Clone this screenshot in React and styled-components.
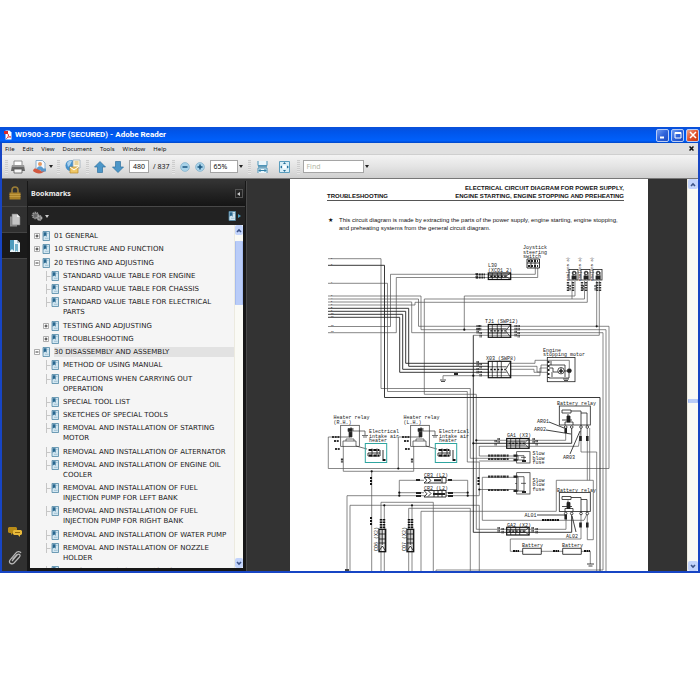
import React from "react";
import styled, { createGlobalStyle } from "styled-components";

const Global = createGlobalStyle`
  *, *::before, *::after { box-sizing: border-box; }
  body { margin: 0; background: #fff; font-family: "DejaVu Sans", sans-serif; font-size: 7px; color: #111; }
  button, input, select { font: inherit; color: inherit; margin: 0; padding: 0; border: 0; background: none; }
  ul { list-style: none; margin: 0; padding: 0; }
  svg { display: block; flex: none; }
`;

const Screen = styled.div`
  height: 100vh;
  min-height: 420px;
  padding: 127px 0;
  display: flex;
`;
const AppWindow = styled.main`
  flex: 1;
  min-width: 0;
  display: flex;
  flex-direction: column;
  border: solid #1745c4;
  border-width: 0 2px 2px;
`;
const TitleBar = styled.header`
  flex: none;
  height: 16px;
  margin: 0 -2px;
  padding: 0 1px 0 4px;
  display: flex;
  align-items: center;
  gap: 3px;
  background: linear-gradient(#0a50d8, #0055ea 30%, #0060fb 85%, #0046c8);
`;
const Title = styled.h1`
  margin: 0;
  flex: 1;
  font: bold 8px/14px Roboto, sans-serif;
  color: #fff;
`;
const WindowButton = styled.button`
  width: 13px;
  height: 13px;
  margin-left: -1px;
  border: 1px solid #b9ccf5;
  border-radius: 2px;
  background: ${(p) => (p.$close ? "linear-gradient(135deg, #f0a48c, #e2512c 50%, #c53a14)" : "linear-gradient(135deg, #6d9bf3, #2f63da 50%, #1d4cc0)")};
  display: grid;
  place-items: center;
`;
const MenuBar = styled.nav`
  flex: none;
  height: 12px;
  padding: 0 4px 0 3px;
  display: flex;
  align-items: center;
  background: #e0e0e0;
  border-bottom: 1px solid #cfcfcf;
  font: 6px/10px "Noto Sans", sans-serif;
  gap: 8px;
`;
const MenuButton = styled.button`
  white-space: nowrap;
`;
const CloseDoc = styled.button`
  margin-left: auto;
`;
const ToolBar = styled.div`
  flex: none;
  height: 24px;
  padding: 0 3px;
  display: flex;
  align-items: center;
  background: linear-gradient(#f3f3f3, #e4e4e4 50%, #cfcfcf);
  border-bottom: 1px solid #777;
`;
const ToolButton = styled.button`
  display: flex;
  align-items: center;
  gap: 2px;
  margin-left: ${(p) => p.$gap || 0}px;
`;
const Grip = styled.span`
  width: 3px;
  height: 14px;
  margin-left: ${(p) => p.$gap || 0}px;
  background: repeating-linear-gradient(#cdcdcd 0 1px, #e6e6e6 1px 2px);
`;
const Field = styled.input`
  width: ${(p) => p.$w}px;
  height: 13px;
  margin-left: ${(p) => p.$gap || 0}px;
  padding: 0 2px;
  border: 1px solid #a5a5a5;
  background: #fff;
  text-align: ${(p) => p.$align || "left"};
  font: 7px/11px "Noto Sans", sans-serif;
  &::placeholder { color: #b5b8a8; opacity: 1; }
`;
const PageCount = styled.span`
  margin-left: 4px;
  font: 7px/12px "Noto Sans", sans-serif;
`;
const Body = styled.div`
  flex: 1;
  min-height: 0;
  display: flex;
  background: #333;
`;
const Rail = styled.nav`
  flex: none;
  width: 25px;
  display: flex;
  flex-direction: column;
  background: #303030;
`;
const RailButton = styled.button`
  height: ${(p) => p.$h || 26}px;
  margin-top: ${(p) => (p.$push ? "auto" : "0")};
  display: grid;
  place-items: center;
  background: ${(p) => (p.$active ? "#1a1a1a" : "none")};
  border-bottom: 1px solid ${(p) => (p.$line ? "#444" : "transparent")};
`;
const Panel = styled.aside`
  flex: none;
  width: 220px;
  margin-top: 2px;
  padding: 0 3px 3px 3px;
  display: flex;
  flex-direction: column;
  background: #171717;
  border-right: 1px solid #484848;
`;
const PanelHead = styled.div`
  flex: none;
  height: 26px;
  margin: 0 -2px;
  padding: 0 2px 0 3px;
  display: flex;
  align-items: center;
  justify-content: space-between;
  background: linear-gradient(#333, #202020 60%, #151515);
  border-bottom: 1px solid #484848;
`;
const PanelTitle = styled.h2`
  margin: 0;
  font: bold 7px/12px "Noto Sans", sans-serif;
  color: #eee;
`;
const Collapse = styled.button`
  width: 8px;
  height: 9px;
  border: 1px solid #555;
  display: grid;
  place-items: center;
`;
const PanelTools = styled.div`
  flex: none;
  height: 18px;
  padding: 0 4px 0 3px;
  display: flex;
  align-items: center;
  justify-content: space-between;
  background: #222;
  margin: 0 -2px;
`;
const ListArea = styled.div`
  flex: 1;
  min-height: 0;
  display: flex;
  background: #f5f5f5;
`;
const Tree = styled.div`
  flex: 1;
  min-width: 0;
  overflow: hidden;
  display: flex;
`;
const TreeList = styled.ul`
  flex: 1;
  margin: 6px 0 -8px;
  display: flex;
  flex-direction: column;
  justify-content: space-between;
`;
const TreeItem = styled.li`
  display: flex;
  align-items: flex-start;
  padding-left: ${(p) => (p.$level ? 13 : 4)}px;
  background: linear-gradient(90deg, transparent 24px, ${(p) => (p.$selected ? "#e2e2e2" : "transparent")} 24px);
`;
const Toggle = styled.button`
  flex: none;
  width: 8px;
  height: 10px;
  display: grid;
  place-items: center start;
`;
const TreeLink = styled.a`
  display: flex;
  gap: 4px;
  color: #222;
  text-decoration: none;
  white-space: nowrap;
  font: 7px/10px "DejaVu Sans", sans-serif;
`;
const ScrollBar = styled.div`
  flex: none;
  width: ${(p) => p.$w}px;
  display: flex;
  flex-direction: column;
  background: #fafaf5;
  border-left: 1px solid #eceadf;
`;
const ScrollButton = styled.button`
  flex: none;
  height: 10px;
  display: grid;
  place-items: center;
  border-radius: 2px;
  background: #c3d4fb;
`;
const ScrollTrack = styled.div`
  flex: 1;
  display: grid;
  grid-template-rows: ${(p) => p.$rows};
`;
const Thumb = styled.div`
  grid-row: 2;
  border-radius: 1px;
  background: #b9ccf8;
  border: solid #a5bbef;
  border-width: 0 1px;
`;
const DocArea = styled.section`
  flex: 1;
  min-width: 0;
  padding: 0 39px 0 43px;
  overflow: hidden;
`;
const Page = styled.article`
  min-height: 100%;
  background: #fff;
  font-family: "Liberation Sans", sans-serif;
`;
const PageHead = styled.header`
  margin: 0 24px 0 37px;
  padding-top: 5px;
  display: flex;
  align-items: flex-end;
  justify-content: space-between;
  border-bottom: 1px solid #555;
  font: bold 6px/8px "Liberation Sans", sans-serif;
`;
const PageTitle = styled.h3`
  margin: 0;
  font: inherit;
  text-align: right;
  white-space: nowrap;
`;
const Note = styled.p`
  margin: 15px 24px 9px 38px;
  display: flex;
  gap: 6px;
  font: 6px/8px "Liberation Sans", sans-serif;
  white-space: nowrap;
`;
const Diagram = styled.svg`
  width: 100%;
  height: auto;
  text { font: 5px "Liberation Mono", monospace; fill: #222; }
  .pin { font-size: 2px; font-weight: bold; }
  .tag { font-size: 4px; }
`;

const Down = ({ color = "#222" }) => (
  <svg width="4" height="3"><path d="M0 0h4L2 3z" fill={color} /></svg>
);
const Chevron = ({ up }) => (
  <svg width="6" height="5"><path d={up ? "M1 4l2-2 2 2" : "M1 1l2 2 2-2"} fill="none" stroke="#3d5488" strokeWidth="1.6" /></svg>
);
const BookmarkIcon = () => (
  <svg width="8" height="10" viewBox="0 0 8 10">
    <path d="M1 .5h6.5v9H1z" fill="#d3e7f1" stroke="#4f87a5" strokeWidth=".8" />
    <path d="M1.6 1.2h3v4.6L3.2 4.6 1.6 5.8z" fill="#28678f" />
    <path d="M5 2.4h1.6M3 7.3h3.6" stroke="#8eb5c9" strokeWidth=".7" />
  </svg>
);
const PdfIcon = () => (
  <svg width="8" height="10" viewBox="0 0 8 10">
    <path d="M1.5.5h4l2 2v7h-6z" fill="#fff" /><path d="M0 1h4v3H0z" fill="#d92a2a" />
    <path d="M2.4 8.6c1.6-1 2.6-4 2-4.3-.8-.2 0 2.6 2.6 2.7C5.5 6.700 3.200 7.300 2.400 8.600z" fill="none" stroke="#d33" strokeWidth=".8" />
  </svg>
);
const PrintIcon = () => (
  <svg width="14" height="14" viewBox="0 0 14 14">
    <path d="M3 1h8v5H3z" fill="#fff" stroke="#777" strokeWidth=".8" />
    <path d="M1 5h12l1 6H0z" fill="#686868" /><path d="M1 5h12v2H1z" fill="#999" />
    <path d="M3 9h8v4H3z" fill="#f5f5f5" stroke="#555" strokeWidth=".8" />
  </svg>
);
const ReviewIcon = () => (
  <svg width="14" height="14" viewBox="0 0 14 14">
    <path d="M3 .5h6.500l2.500 2.500v8H3z" fill="#f6faff" stroke="#7ea6ca" strokeWidth=".9" />
    <circle cx="7" cy="4" r="2" fill="#e79a63" /><path d="M3.500 10c0-5 7-5 7 0z" fill="#5c9bd0" />
    <path d="M0 11c1-4 4-2 6-1s4 0 7-1c-2 5-9 6-13 2z" fill="#d2583f" /><path d="M8 8.500h5v3H8z" fill="#5a96c8" />
  </svg>
);
const ShareIcon = () => (
  <svg width="16" height="15" viewBox="0 0 16 15">
    <circle cx="6" cy="6.500" r="5.500" fill="#4591cc" /><path d="M2 4c2-3 4-3 5-2L5 6 3 8z" fill="#a9d0ec" />
    <path d="M8 1h7v8H8z" fill="#fff7df" stroke="#92a5b4" strokeWidth=".7" /><path d="M9.500 3h4M9.500 5h4" stroke="#d4ad52" />
    <path d="M5 8h8v6H5z" fill="#f0c765" stroke="#b78a2b" strokeWidth=".7" /><path d="M5 8l4 3 4-3" fill="none" stroke="#fff" />
  </svg>
);
const ArrowIcon = ({ up }) => (
  <svg width="12" height="12" viewBox="0 0 12 12">
    <path d={up ? "M6 .5L11.500 6H8.500v5.500h-5V6h-3z" : "M6 11.500L.5 6h3V.5h5V6h3z"} fill="#4b96c8" stroke="#2f719f" strokeWidth=".7" />
  </svg>
);
const ZoomIcon = ({ plus }) => (
  <svg width="10" height="10" viewBox="0 0 10 10">
    <circle cx="5" cy="5" r="4.400" fill="#a9d3e9" stroke="#7eaec8" strokeWidth=".7" />
    <path d={plus ? "M2.500 5h5M5 2.500v5" : "M2.500 5h5"} stroke="#18557f" strokeWidth="1.500" />
  </svg>
);
const FitWidthIcon = () => (
  <svg width="11" height="12" viewBox="0 0 11 12">
    <path d="M1 0v4.500h9V0M1 12V7h9v5" fill="#e9f5fb" stroke="#4d94b8" /><path d="M1 5.800h9M2 9.500h7M3.500 8L2 9.500 3.500 11M7.500 8L9 9.500 7.500 11" fill="none" stroke="#2f7fa8" />
  </svg>
);
const FitPageIcon = () => (
  <svg width="11" height="12" viewBox="0 0 11 12">
    <path d="M.5.5h10v11H.5z" fill="#d9eef7" stroke="#5a9dbd" />
    <path d="M5.500 1l1.500 2H4zM5.500 11L7 9H4zM1 6l2-1.500v3zM10 6L8 4.500v3z" fill="#246f9a" /><path d="M4 4.500h3v3H4z" fill="#fff" />
  </svg>
);
const LockIcon = () => (
  <svg width="12" height="14" viewBox="0 0 12 14">
    <path d="M3 7V4c0-4 6-4 6 0v3" fill="none" stroke="#9b7d36" strokeWidth="1.600" />
    <path d="M.5 6.500h11v7H.5z" fill="#a98128" /><path d="M.5 8.500h11M.5 10.500h11" stroke="#c9a247" strokeWidth=".8" />
  </svg>
);
const PagesIcon = () => (
  <svg width="12" height="14" viewBox="0 0 12 14">
    <path d="M1 3.500h7v10H1z" fill="#8f8f8f" /><path d="M3 1h5l3 3v8H3z" fill="#c4c4c4" stroke="#777" strokeWidth=".6" /><path d="M8 1v3h3" fill="#eee" />
  </svg>
);
const MarksIcon = () => (
  <svg width="12" height="14" viewBox="0 0 12 14">
    <path d="M1 1h7l3 3v9H1z" fill="#eaf4f8" /><path d="M8 1v3h3z" fill="#a9bdc7" />
    <path d="M1 1h4v11L3 10l-2 2z" fill="#4e9cbd" /><path d="M6 5h3v8L7.500 11.500 6 13z" fill="#72b1ca" />
  </svg>
);
const CommentsIcon = () => (
  <svg width="14" height="12" viewBox="0 0 14 12">
    <path d="M1 1h7l1 1v4L8 7H5L3 9V7H1L0 6V2z" fill="#b88b17" />
    <path d="M6 4h7l1 1v3l-1 1h-1v2L10 9H6L5 8V5z" fill="#e8b93a" /><path d="M7 6.500h5" stroke="#94690c" />
  </svg>
);
const ClipIcon = () => (
  <svg width="14" height="14" viewBox="0 0 14 14">
    <path d="M4 10l5-6c2-2 4 0 2.500 2L6 12c-2 2-6 0-4-3l6-7c1-1.500 4-2 5 0M4.500 8.500L9 3.500" fill="none" stroke="#b9b9b9" strokeWidth="1.200" />
  </svg>
);
const GearIcon = () => (
  <svg width="12" height="11" viewBox="0 0 12 11">
    <circle cx="4.500" cy="4.500" r="2.800" fill="#666" stroke="#999" strokeWidth="2" strokeDasharray="1.400 .6" />
    <circle cx="8.500" cy="7" r="2" fill="#777" stroke="#aaa" strokeWidth="1.800" strokeDasharray="1.200 .5" />
  </svg>
);
const ToggleIcon = ({ open }) => (
  <svg width="6" height="6" viewBox="0 0 6 6">
    <path d="M.5.500h5v5h-5z" fill="#fff" stroke="#999" strokeWidth=".8" /><path d={open ? "M1.500 3h3" : "M1.500 3h3M3 1.500v3"} stroke="#222" strokeWidth=".9" />
  </svg>
);

const bookmarks = [
  { lines: ["01 GENERAL"], toggle: "closed" },
  { lines: ["10 STRUCTURE AND FUNCTION"], toggle: "closed" },
  { lines: ["20 TESTING AND ADJUSTING"], toggle: "open" },
  { lines: ["STANDARD VALUE TABLE FOR ENGINE"], level: 1 },
  { lines: ["STANDARD VALUE TABLE FOR CHASSIS"], level: 1 },
  { lines: ["STANDARD VALUE TABLE FOR ELECTRICAL", "PARTS"], level: 1 },
  { lines: ["TESTING AND ADJUSTING"], level: 1, toggle: "closed" },
  { lines: ["TROUBLESHOOTING"], level: 1, toggle: "closed" },
  { lines: ["30 DISASSEMBLY AND ASSEMBLY"], toggle: "open", selected: true },
  { lines: ["METHOD OF USING MANUAL"], level: 1 },
  { lines: ["PRECAUTIONS WHEN CARRYING OUT", "OPERATION"], level: 1 },
  { lines: ["SPECIAL TOOL LIST"], level: 1 },
  { lines: ["SKETCHES OF SPECIAL TOOLS"], level: 1 },
  { lines: ["REMOVAL AND INSTALLATION OF STARTING", "MOTOR"], level: 1 },
  { lines: ["REMOVAL AND INSTALLATION OF ALTERNATOR"], level: 1 },
  { lines: ["REMOVAL AND INSTALLATION OF ENGINE OIL", "COOLER"], level: 1 },
  { lines: ["REMOVAL AND INSTALLATION OF FUEL", "INJECTION PUMP FOR LEFT BANK"], level: 1 },
  { lines: ["REMOVAL AND INSTALLATION OF FUEL", "INJECTION PUMP FOR RIGHT BANK"], level: 1 },
  { lines: ["REMOVAL AND INSTALLATION OF WATER PUMP"], level: 1 },
  { lines: ["REMOVAL AND INSTALLATION OF NOZZLE", "HOLDER"], level: 1 },
  { lines: ["REMOVAL AND INSTALLATION OF"], level: 1 },
];

const thinWires = [
  "M328 257.700H381V387.500H470.300V457.300H517",
  "M328 282.300H387.500V390.500H467.300V461H479.300V494.500",
  "M328 295H421V328.700H606V571",
  "M328 298H418.500V325.300H609V467.500H328.300V436H341",
  "M328 301H411.700V331.700H603V569H436V571",
  "M328 304H415V301.300H587.300V280M424.300 298V393.300H476.300V528.300H566V512",
  "M424.300 298H584.500V280M464.300 328V295H575V280M572 280V298",
  "M328 325.500H390.500V273.300H535.300V267M328 331.700H396.300V276.500H537.700V267",
  "M596.700 280V325M599.300 280V334.300H473.300",
  "M443 378V374.700H540V367H548M510 362.300H535V359.300H569.300V367M510 365.300H537V371H541V364H548M510 368.300H534V371.300H548",
  "M479.300 445.300H578.500L581 427M479.300 445V455H517M517 460H479",
  "M565.700 427V439.300H476.500M581 427V451H596.700V571M587.300 427V479.300M589.700 427V479.300",
  "M587.300 513V538.700H593.300V479.300H556.300V510.300H421V571",
  "M581 513V538H510.300V550.300H523M541 550.300H563M581 550.300H590.300V563",
  "M517 476.300H482.300V519.300H584L587 513M517 488.500H479.300M517 482.500H515",
  "M343.300 445V470.300H413.700V445M398.300 467.500V436H411M371.700 470.300V571",
  "M424 479.300H399.300V494.700M446 479.300H467.700V494.700M424 491.700H399.300M446 491.700H467.700",
  "M347 571V494.700H479.300M350 571V504.300H479.300V571",
  "M384.300 504.300V571M381 571V501.300H433.300V571M408.700 571V507.300H470.300V571M412 504.300V571",
];
const darkWires = [
  "M328 264.300H384.500V396.500H600V571",
  "M328 307.300H408.700V365.300H489",
  "M328 310.300H405.700V362.300H489",
  "M328 313.300H402.700V368.300H489",
  "M328 316.300H399.700V371.300H489",
  "M473.300 334.300V531.300H571.700V513M473.300 442.300H571.700V427",
];
const hashes = [
  [476, 272], [569, 284], [582, 284], [595, 284], [477, 324], [479.500, 324], [515, 324], [518, 324],
  [477, 327], [480, 331], [515, 330], [518, 331], [477, 360], [480, 362], [477, 367], [480, 370],
  [495, 439], [498, 437], [533, 437], [536, 439], [498, 526], [502, 527], [532, 526], [536, 527],
];
const dots = [[596.700, 325.300], [464.300, 328.700], [473.300, 374.700], [473.300, 442.300], [476.300, 439.300], [371.700, 470.300], [398.300, 467.500], [399.300, 491.700], [399.300, 494.700], [467.700, 491.700], [467.700, 494.700], [479.300, 488.500], [384.300, 504.300], [412, 504.300]];
const pins = [
  ["1", 257.500], ["2", 264], ["7", 282], ["3", 294.700], ["4", 297.700], ["5", 300.700], ["6", 303.700],
  ["8", 307], ["9", 310], ["10", 313], ["11", 316], ["12", 325.200], ["13", 331.400],
];
const labels = [
  [523, 248, "Joystick"], [523, 252.500, "steering"], [523, 257, "switch"],
  [488, 266, "L30"], [488, 271, "(XCO1 2)"], [485, 322, "TJ1 (SWP12)"], [486, 359, "X03 (SWP8)"],
  [543, 350.500, "Engine"], [543, 355, "stopping motor"], [557, 403.500, "Battery relay"],
  [537, 422, "AR01"], [534, 430, "AR02"], [563, 457.500, "AR03"], [507, 436, "GA1 (X3)"],
  [532.500, 454, "Slow"], [532.500, 458.500, "blow"], [532.500, 463, "fuse"],
  [532.500, 480.500, "Slow"], [532.500, 485, "blow"], [532.500, 489.500, "fuse"],
  [557, 490.500, "Battery relay"], [524.500, 516, "AL01"], [566, 537, "AL02"], [507, 525.500, "GA2 (X2)"],
  [522, 545.500, "Battery"], [562, 545.500, "Battery"], [424, 475.500, "CR3 (L2)"], [424, 488.500, "CR2 (L2)"],
];

const Connector = ({ x, y, w = 22.400, h }) => (
  <g stroke="#111" fill="none">
    <rect x={x} y={y} width={w} height={h} strokeWidth="1.200" />
    <path strokeWidth=".7" d={`M${x + 4} ${y}v${h}M${x + 9} ${y}v${h}M${x + 13} ${y}v${h}M${x} ${y + h / 3}h${w - 4}M${x} ${y + (h * 2) / 3}h${w - 4}M${x + w} ${y}l-5 ${h / 2} 5 ${h / 2}`} />
    <path strokeWidth="1.300" strokeDasharray="2 1.500" d={`M${x + 2} ${y + h / 2}h${w - 7}`} />
  </g>
);
const VerticalConnector = ({ x, label }) => (
  <g stroke="#111" fill="none">
    <rect x={x} y="528.300" width="6.700" height="22.400" strokeWidth="1.300" />
    <path strokeWidth=".8" d={`M${x} 533h6.700M${x} 538h6.700M${x} 542h6.700M${x + 3.300} 528v16M${x} 550l3.300-5 3.300 5`} />
    <path strokeWidth="2.500" strokeDasharray="1.500 1" d={`M${x + 2} 518v9M${x + 5} 518v9`} />
    <text transform={`translate(${x - 1} 550) rotate(-90)`} stroke="none">{label}</text>
  </g>
);
const HeaterRelay = ({ x, side }) => (
  <g transform={`translate(${x} 0)`} fill="none" stroke="#333" strokeWidth=".7">
    <text x="333.500" y="417.500" stroke="none">Heater relay</text>
    <text x="333.500" y="423" stroke="none">{side}</text>
    <rect x="340.700" y="424.300" width="18.600" height="21" />
    <path d="M341 436h9v-4M352 431v-4h-2M353 427v3h12v4M362 434.500h6M363 436h4M343 445v-5h13v5l11 3M346 440v-2h8v2" />
    <path d="M349 436v-5h3v5zM348 427.500h4v3h-4z" fill="#222" />
    <path d="M332 436h8M334 440h5M335 448h5M342 457.500v4" strokeWidth="2.200" strokeDasharray="2 .7" />
    <text x="369" y="432" stroke="none">Electrical</text>
    <text x="369" y="436.500" stroke="none">intake air</text>
    <text x="369" y="441" stroke="none">heater</text>
    <rect x="365.300" y="442.500" width="21.400" height="19" stroke="#2fa5a0" strokeWidth="1" />
    <path d="M368 449h12v6h-12v-3h12M372 447.500v8M377 447.500v8M383 449v9" strokeWidth="1" />
    <path d="M369 449h10M369 454.500h10M382.500 459h3" stroke="#111" strokeWidth="2.200" strokeDasharray="3 1.500" />
  </g>
);
const BatteryRelay = ({ y }) => (
  <g fill="none" stroke="#222" strokeWidth=".8">
    <rect x="559.300" y={y} width="31" height="19" />
    <path d={`M562 ${y + 4}h9v3h-9zM571 ${y + 5}h10v15M568 ${y + 8}v3M565 ${y + 19}v-3h8v3M587 ${y + 20}v-13h-6M562 ${y + 14}h10`} />
    <path d={`M567 ${y + 10}h3v6h-3z`} fill="#222" />
    {[565.700, 571.700, 581, 587.300].map((x) => <circle key={x} cx={x} cy={y + 21} r="1.300" fill="#fff" />)}
    <path d={`M565.700 ${y + 22}v5M580.500 ${y + 30}v5M587.300 ${y + 30}v5`} strokeWidth="2.600" />
  </g>
);
const FuseBox = ({ y, h }) => (
  <g fill="none" stroke="#222" strokeWidth=".7">
    <rect x="516.700" y={y} width="13.300" height={h} />
    <path d={`M514 ${y + 4}h10v${h - 7}h-10M518 ${y + 4}v${h - 7}M521 ${y + h / 2}h5`} />
    <path d={`M513.500 ${y + 4}h4M513.500 ${y + h - 3}h4M522 ${y + h - 2}h4`} strokeWidth="2.200" />
    <path d={`M488 ${y + 4}h21M488 ${y + h - 4}h21`} stroke="#333" strokeWidth="2.200" strokeDasharray="2 .5 3 .7" />
  </g>
);

const CircuitDiagram = () => (
  <Diagram viewBox="290 240 358 331" role="img" aria-label="Electrical circuit diagram">
    <g fill="none" strokeWidth=".7">
      <path d={thinWires.join("")} stroke="#555" />
      <path d={darkWires.join("")} stroke="#222" strokeWidth=".9" />
    </g>
    {pins.map(([t, y]) => <text key={t} className="pin" x="331" y={y}>{t}</text>)}
    {hashes.map(([x, y]) => <path key={`${x}-${y}`} d={`M${x} ${y}v6M${x + 1.300} ${y}v6`} stroke="#333" strokeWidth="1" strokeDasharray="2 .8" />)}
    <path d="M476 273.500h9M476 276.500h9" stroke="#222" strokeWidth="1.800" strokeDasharray="2 .7" />
    <path d="M568 281v10M573 281v10M582 281v10M586 281v10M597 281v10M600 281v10" stroke="#333" strokeWidth="2.400" strokeDasharray="1.500 1" />
    {dots.map(([x, y]) => <circle key={`${x}-${y}`} cx={x} cy={y} r="1.100" fill="#111" />)}
    <Connector x={488.300} y={272} h={6.500} />
    <Connector x={488.300} y={323.500} h={12.800} />
    <Connector x={488.300} y={360.300} h={16.400} />
    <Connector x={506.700} y={437.500} h={9.800} />
    <Connector x={506.700} y={526.300} h={7.700} />
    <g fill="#fff" stroke="#222" strokeWidth=".9">
      <path d="M424 476.500h22v5.500h-22l3-2.700zM424 489.500h22v6.500h-22l3-3.200z" />
      <path d="M428 476.500l3 3-3 2.500M428 489.500l3 3-3 3M434 489.500v6.500M438 489.500v6.500M442 476.500v5.500M442 489.500v6.500" fill="none" />
      <path d="M416 479h4M448 479h4M416 492h5M448 492h5M416 495h5M448 495h5M434 479.300h7M433 493h12" strokeWidth="2" />
      <path d="M527 258h12.500v9H527zM527 262h12.500M531 258v9M535 258v9" />
      <path d="M528 260h10M528 265h10" strokeWidth="2" strokeDasharray="2 1" />
    </g>
    {[571, 583, 595].map((x) => (
      <g key={x} fill="none" stroke="#222" strokeWidth=".8">
        <rect x={x - 2} y="268.500" width="9" height="10.500" />
        <path d={`M${x + 2} 279v-8h3v8`} /><circle cx={x + 3} cy="272" r="1.800" /><rect x={x + 1} y="275" width="4" height="3" fill="#222" />
      </g>
    ))}
    {[["R06(XC5 3)", 568.500], ["R05(XC5 3)", 581], ["R04(XC5 3)", 593]].map(([t, x]) => (
      <text key={t} className="tag" transform={`translate(${x} 280) rotate(-90)`}>{t}</text>
    ))}
    <g fill="none" stroke="#222" strokeWidth=".8">
      <rect x="547.300" y="356.500" width="27.700" height="24.200" />
      <circle cx="561" cy="369.700" r="3.200" /><circle cx="569.300" cy="369.700" r="2" fill="#222" />
      <path d="M549 364h16v12M549 367h4v4h5M564 370h4M569 372v5h-20M563 378h6M564 379.500h4M551 360v4M552 371v5" />
      <path d="M559 370h4M561 367.500v4.500" strokeWidth="1.500" />
      <path d="M548.500 360v17" strokeWidth="2" strokeDasharray="2 2" />
      <path d="M440 379h6M441 380.500h4" /><path d="M454 373h4" strokeWidth="2" />
    </g>
    <BatteryRelay y={405} />
    <BatteryRelay y={491.500} />
    <FuseBox y={450.700} h={11.300} />
    <FuseBox y={471.700} h={21.300} />
    <g fill="none" stroke="#111" strokeWidth=".8">
      <path d="M549 421l15 6M546 429l25 4M570 453l10-23M537 514h28M576 531l-4-16" />
      <path d="M522.700 547.300h18.600v6h-18.600zM562.700 547.300h18.600v6h-18.600zM587 563h7M588.500 565h4" />
      <path d="M513 550h6M553 550h6M584 550h6M542 519h17" strokeWidth="2" strokeDasharray="2 .5" />
      <path d="M371 476v8M371 516v8M478.500 476v9" strokeWidth="2" strokeDasharray="2 1" />
    </g>
    {labels.map(([x, y, t]) => <text key={`${x}-${y}`} x={x} y={y}>{t}</text>)}
    <HeaterRelay x={0} side="(R.H.)" />
    <HeaterRelay x={70} side="(L.H.)" />
    <VerticalConnector x={379} label="CO6 (X2)" />
    <VerticalConnector x={407} label="CO7 (X2)" />
    <path d="M345 568h4v3h-4z" fill="#444" />
  </Diagram>
);

export default function App() {
  return (
    <>
      <Global />
      <Screen>
        <AppWindow>
          <TitleBar>
            <PdfIcon />
            <Title>WD900-3.PDF (SECURED) - Adobe Reader</Title>
            <WindowButton aria-label="Minimize"><svg width="8" height="8"><path d="M1 6.500h4" stroke="#fff" strokeWidth="2" /></svg></WindowButton>
            <WindowButton aria-label="Maximize"><svg width="8" height="8"><path d="M1 1.500h6v5.500H1zM1 2.500h6" fill="none" stroke="#fff" /></svg></WindowButton>
            <WindowButton $close aria-label="Close"><svg width="8" height="8"><path d="M1 1l6 6M7 1L1 7" stroke="#fff" strokeWidth="1.500" /></svg></WindowButton>
          </TitleBar>
          <MenuBar>
            {["File", "Edit", "View", "Document", "Tools", "Window", "Help"].map((m) => <MenuButton key={m}>{m}</MenuButton>)}
            <CloseDoc aria-label="Close document"><svg width="5" height="5"><path d="M.5.500l4 4M4.500.500l-4 4" stroke="#111" strokeWidth="1.500" /></svg></CloseDoc>
          </MenuBar>
          <ToolBar>
            <Grip />
            <ToolButton $gap={3} aria-label="Print"><PrintIcon /></ToolButton>
            <ToolButton $gap={8} aria-label="Review"><ReviewIcon /><Down /></ToolButton>
            <Grip $gap={4} />
            <ToolButton $gap={5} aria-label="Share"><ShareIcon /></ToolButton>
            <Grip $gap={5} />
            <ToolButton $gap={5} aria-label="Previous page"><ArrowIcon up /></ToolButton>
            <ToolButton $gap={6} aria-label="Next page"><ArrowIcon /></ToolButton>
            <Field $w={20} $gap={5} $align="center" aria-label="Page number" defaultValue="480" />
            <PageCount>/ 837</PageCount>
            <Grip $gap={3} />
            <ToolButton $gap={5} aria-label="Zoom out"><ZoomIcon /></ToolButton>
            <ToolButton $gap={5} aria-label="Zoom in"><ZoomIcon plus /></ToolButton>
            <Field $w={28} $gap={5} aria-label="Zoom level" defaultValue="65%" />
            <ToolButton $gap={1} aria-label="Zoom levels"><Down /></ToolButton>
            <Grip $gap={5} />
            <ToolButton $gap={6} aria-label="Fit width"><FitWidthIcon /></ToolButton>
            <ToolButton $gap={11} aria-label="Fit page"><FitPageIcon /></ToolButton>
            <Grip $gap={7} />
            <Field $w={61} $gap={3} aria-label="Find" placeholder="Find" />
            <ToolButton $gap={1} aria-label="Find options"><Down /></ToolButton>
          </ToolBar>
          <Body>
            <Rail>
              <RailButton $h={28} $line aria-label="Security"><LockIcon /></RailButton>
              <RailButton $line aria-label="Pages"><PagesIcon /></RailButton>
              <RailButton $active $line aria-label="Bookmarks"><MarksIcon /></RailButton>
              <RailButton $push aria-label="Comments"><CommentsIcon /></RailButton>
              <RailButton aria-label="Attachments"><ClipIcon /></RailButton>
            </Rail>
            <Panel>
              <PanelHead>
                <PanelTitle>Bookmarks</PanelTitle>
                <Collapse aria-label="Collapse panel"><svg width="4" height="4"><path d="M3 0v4L0 2z" fill="#ccc" /></svg></Collapse>
              </PanelHead>
              <PanelTools>
                <ToolButton aria-label="Options"><GearIcon /><Down color="#ccc" /></ToolButton>
                <ToolButton aria-label="Expand current bookmark"><BookmarkIcon /><svg width="3" height="4"><path d="M0 0l3 2-3 2z" fill="#4aa0c4" /></svg></ToolButton>
              </PanelTools>
              <ListArea>
                <Tree>
                  <TreeList>
                    {bookmarks.map((b, i) => (
                      <TreeItem key={i} $level={b.level} $selected={b.selected}>
                        {b.toggle
                          ? <Toggle aria-label={`Toggle ${b.lines[0]}`}><ToggleIcon open={b.toggle === "open"} /></Toggle>
                          : <Toggle as="span"><svg width="8" height="10"><path d="M3.500 0v10M3.500 5.500h4" fill="none" stroke="#c6c6c6" /></svg></Toggle>}
                        <TreeLink href="#"><BookmarkIcon /><span>{b.lines[0]}{b.lines[1] && <><br />{b.lines[1]}</>}</span></TreeLink>
                      </TreeItem>
                    ))}
                  </TreeList>
                </Tree>
                <ScrollBar $w={9}>
                  <ScrollButton aria-label="Scroll up"><Chevron up /></ScrollButton>
                  <ScrollTrack $rows="6px 64px 1fr"><Thumb /></ScrollTrack>
                  <ScrollButton aria-label="Scroll down"><Chevron /></ScrollButton>
                </ScrollBar>
              </ListArea>
            </Panel>
            <DocArea>
              <Page>
                <PageHead>
                  <span>TROUBLESHOOTING</span>
                  <PageTitle>ELECTRICAL CIRCUIT DIAGRAM FOR POWER SUPPLY,<br />ENGINE STARTING, ENGINE STOPPING AND PREHEATING</PageTitle>
                </PageHead>
                <Note>
                  <span>★</span>
                  <span>This circuit diagram is made by extracting the parts of the power supply, engine starting, engine stopping,<br />and preheating systems from the general circuit diagram.</span>
                </Note>
                <CircuitDiagram />
              </Page>
            </DocArea>
            <ScrollBar $w={11}>
              <ScrollButton aria-label="Page up"><Chevron up /></ScrollButton>
              <ScrollTrack $rows="57fr 4px 43fr"><Thumb /></ScrollTrack>
              <ScrollButton aria-label="Page down"><Chevron /></ScrollButton>
            </ScrollBar>
          </Body>
        </AppWindow>
      </Screen>
    </>
  );
}
